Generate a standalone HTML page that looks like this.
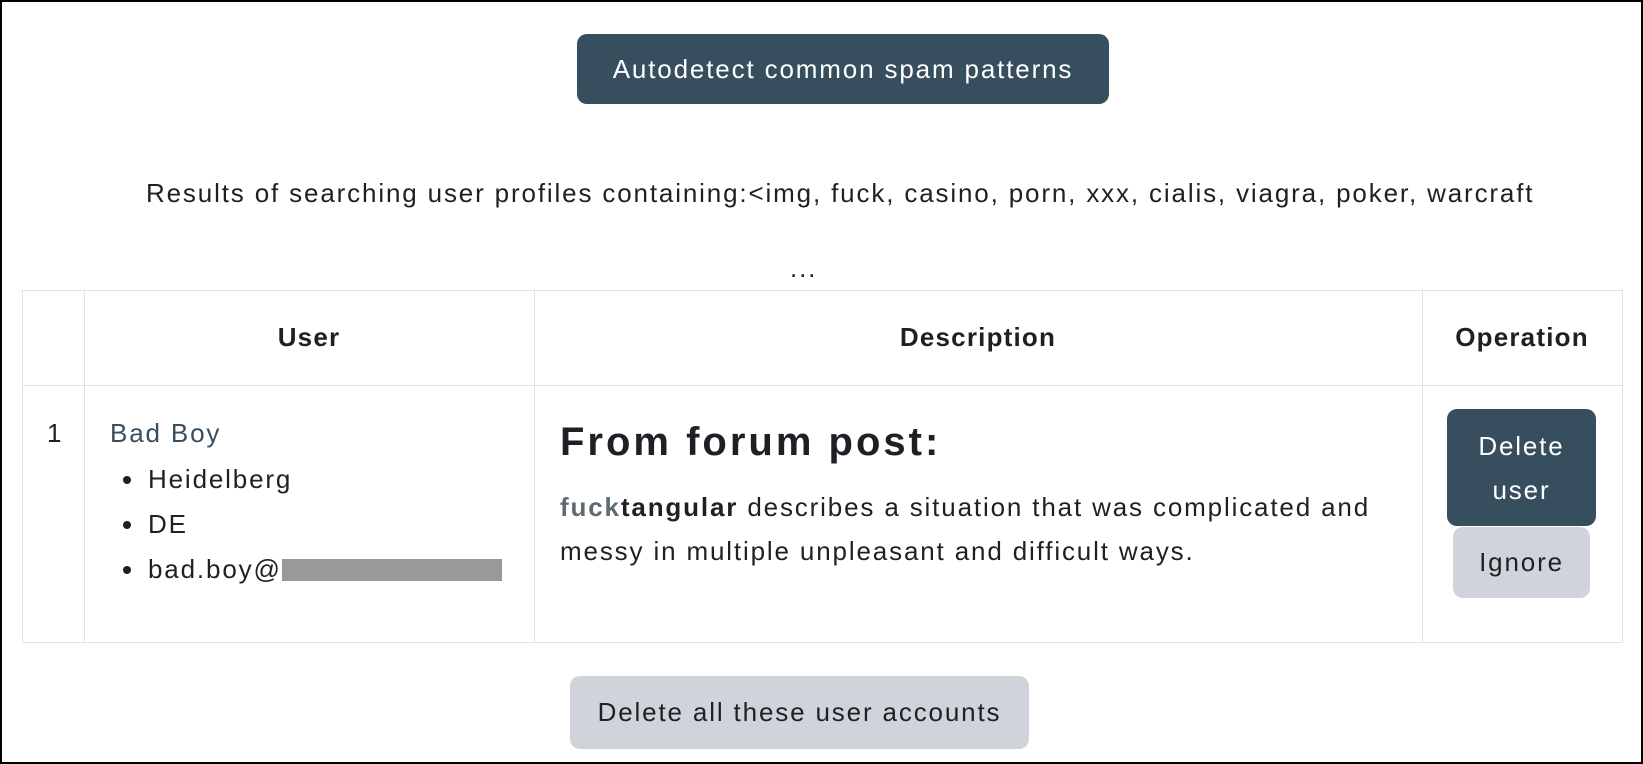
<!DOCTYPE html>
<html><head><style>
*{box-sizing:border-box;margin:0;padding:0}
html,body{width:1643px;height:764px;overflow:hidden;background:#fff}
body{font-family:"Liberation Sans",sans-serif;color:#1d2125;position:relative;border:2px solid #000;letter-spacing:1.85px}
.abs{position:absolute}
.btn{position:absolute;display:flex;align-items:center;justify-content:center;text-align:center;border-radius:10px;font-size:26px}
.dark{background:#364e5e;color:#fff}
.light{background:#ced4da;color:#1d2125}
.v{position:absolute;top:288px;height:353px;width:1px;background:#dee2e6}
.h{position:absolute;left:20px;width:1601px;height:1px;background:#dee2e6}
.th{position:absolute;top:320px;font-weight:bold;font-size:26px;text-align:center;letter-spacing:1.2px}
li{list-style:none;position:relative}
li:before{content:"";position:absolute;left:-25px;top:19px;width:8px;height:8px;border-radius:50%;background:#1d2125}
</style></head><body>
<div class="btn dark" style="left:575px;top:32px;width:532px;height:70px">Autodetect common spam patterns</div>
<div class="abs" style="left:144px;top:176px;font-size:26px;white-space:nowrap">Results of searching user profiles containing:&lt;img, fuck, casino, porn, xxx, cialis, viagra, poker, warcraft</div>
<div class="abs" style="left:788px;top:251px;font-size:26px">...</div>
<div class="h" style="top:288px"></div>
<div class="h" style="top:383px"></div>
<div class="h" style="top:640px"></div>
<div class="v" style="left:20px"></div>
<div class="v" style="left:82px"></div>
<div class="v" style="left:532px"></div>
<div class="v" style="left:1420px"></div>
<div class="v" style="left:1620px"></div>
<div class="th" style="left:82px;width:450px">User</div>
<div class="th" style="left:532px;width:888px">Description</div>
<div class="th" style="left:1420px;width:200px">Operation</div>
<div class="abs" style="left:45px;top:416px;font-size:26px">1</div>
<div class="abs" style="left:108px;top:416px;font-size:26px;color:#364e5e">Bad Boy</div>
<ul class="abs" style="left:146px;top:455px;font-size:26px;line-height:45px">
<li>Heidelberg</li><li>DE</li><li>bad.boy@<span style="display:inline-block;width:220px;height:22px;background:#999;vertical-align:-3px"></span></li>
</ul>
<div class="abs" style="left:558px;top:418px;font-size:40px;font-weight:bold;letter-spacing:3px">From forum post:</div>
<div class="abs" style="left:558px;top:483px;font-size:26px;line-height:44px;width:860px"><b style="color:#5f6a72">fuck</b><b>tangular</b> describes a situation that was complicated and messy in multiple unpleasant and difficult ways.</div>
<div class="btn dark" style="left:1445px;top:407px;width:149px;height:117px;line-height:44px">Delete<br>user</div>
<div class="btn light" style="left:1451px;top:525px;width:137px;height:71px">Ignore</div>
<div class="btn light" style="left:568px;top:674px;width:459px;height:73px">Delete all these user accounts</div>
</body></html>
